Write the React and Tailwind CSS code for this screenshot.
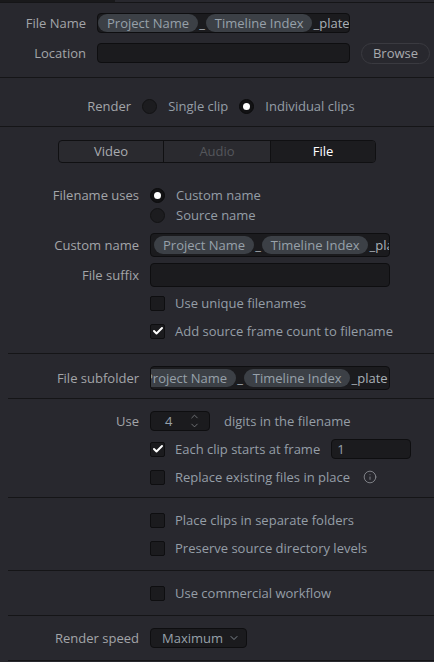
import { ChevronDown, ChevronUp, Check, Info } from "lucide-react";

const Divider = ({ inset = false }) => (
    <div className={`h-px bg-[#151517] ${inset ? "ml-2" : ""}`} />
);

const Pill = ({ children }) => (
    <span className="shrink-0 h-full flex items-center px-[9px] rounded-full bg-[#3c4046] text-[#97a1aa]">
        {children}
    </span>
);

const TokenField = ({ className = "", offset = "" }) => (
    <div
        className={`flex items-center overflow-hidden rounded-sm border border-[#0e0e10] bg-[#1b1b1e] ${className}`}
    >
        <div className={`flex h-full shrink-0 items-center whitespace-nowrap ${offset}`}>
            <Pill>Project Name</Pill>
            <span className="px-px text-[#a9b0b6]">_</span>
            <Pill>Timeline Index</Pill>
            <span className="pl-px text-[#a9b0b6]">_plate</span>
        </div>
    </div>
);

const Radio = ({ checked }) => (
    <span
        className={`flex h-[15px] w-[15px] shrink-0 items-center justify-center rounded-full border ${
            checked ? "border-[#0b0b0c] bg-[#121214]" : "border-[#121214] bg-[#1c1c1f]"
        }`}
    >
        {checked && <span className="h-[7px] w-[7px] rounded-full bg-white" />}
    </span>
);

const Checkbox = ({ checked }) => (
    <span className="flex h-[15px] w-[15px] shrink-0 items-center justify-center rounded-[2px] border border-[#0e0e10] bg-[#1b1b1e]">
        {checked && <Check size={12} strokeWidth={4} className="text-white" />}
    </span>
);

const Row = ({ label, children, className = "" }) => (
    <div className={`flex items-center ${className}`}>
        <div className="w-[140px] shrink-0 pr-[1px] text-right text-[#a3a5a9]">
            {label}
        </div>
        <div className="ml-[10px] flex flex-1 items-center">{children}</div>
    </div>
);

const CheckRow = ({ checked, children, className = "" }) => (
    <Row className={`h-5 ${className}`}>
        <Checkbox checked={checked} />
        <span className="ml-[10px] text-[#959ea7]">{children}</span>
    </Row>
);

export default function App() {
    return (
        <div
            className="relative h-[662px] w-[434px] overflow-hidden bg-[#28282e] text-[13px] leading-none"
            style={{ fontFamily: '"Open Sans", "Noto Sans", sans-serif' }}
        >
            {/* scroll edge at the very top */}
            <div className="flex h-[2px]">
                <div className="w-[115px] bg-[#19191b]" />
            </div>
            <div className="h-px bg-[#151517]" />

            {/* output name and location */}
            <div className="pb-[14px] pt-[10px]">
                <div className="flex h-5 items-center">
                    <div className="w-[86px] text-right text-[#a3a5a9]">File Name</div>
                    <TokenField className="ml-[11px] h-5 w-[253px]" />
                </div>
                <div className="mt-[10px] flex h-5 items-center">
                    <div className="w-[86px] text-right text-[#a3a5a9]">Location</div>
                    <div className="ml-[11px] h-5 w-[253px] rounded-sm border border-[#0e0e10] bg-[#1b1b1e]" />
                    <button className="ml-[11px] flex h-[21px] w-[69px] items-center justify-center rounded-full border border-[#3a3a40] text-[#a8abaf]">
                        Browse
                    </button>
                </div>
            </div>
            <Divider />

            {/* render mode */}
            <div className="flex h-[48px] items-center justify-center pl-[8px] pt-[8px]">
                <span className="text-[#a3a5a9]">Render</span>
                <span className="ml-[11px]">
                    <Radio />
                </span>
                <span className="ml-[11px] text-[#959ea7]">Single clip</span>
                <span className="ml-[11px]">
                    <Radio checked />
                </span>
                <span className="ml-[11px] text-[#959ea7]">Individual clips</span>
            </div>
            <Divider />

            {/* tabs */}
            <div className="pt-[13px]">
                <div className="ml-[58px] flex h-[23px] w-[318px] overflow-hidden rounded-sm border border-[#101012] bg-[#2a2a2f]">
                    <div className="flex w-[105px] items-center justify-center border-r border-[#101012] text-[#a8abaf]">
                        Video
                    </div>
                    <div className="flex w-[107px] items-center justify-center border-r border-[#101012] text-[#55575c]">
                        Audio
                    </div>
                    <div className="flex flex-1 items-center justify-center bg-[#1c1c1f] text-white">
                        File
                    </div>
                </div>
            </div>

            {/* file name options */}
            <div className="pt-[22px]">
                <Row label="Filename uses" className="h-5">
                    <Radio checked />
                    <span className="ml-[11px] text-[#959ea7]">Custom name</span>
                </Row>
                <Row className="h-5">
                    <Radio />
                    <span className="ml-[11px] text-[#959ea7]">Source name</span>
                </Row>
                <Row label="Custom name" className="mt-[8px] h-6">
                    <TokenField className="h-6 w-[240px] pl-[3px] py-[2px]" />
                </Row>
                <Row label="File suffix" className="mt-[6px] h-6">
                    <div className="h-6 w-[240px] rounded-sm border border-[#0e0e10] bg-[#1b1b1e]" />
                </Row>
                <CheckRow className="mt-[6px]">Use unique filenames</CheckRow>
                <CheckRow checked className="mt-[8px]">
                    Add source frame count to filename
                </CheckRow>
            </div>
            <div className="pt-[12px]">
                <Divider inset />
            </div>

            {/* subfolder, scrolled a little to the right */}
            <div className="pb-[8px] pt-[12px]">
                <Row label="File subfolder" className="h-6">
                    <TokenField className="h-6 w-[240px] py-[2px]" offset="-ml-[15px]" />
                </Row>
            </div>
            <Divider inset />

            {/* numbering */}
            <div className="pt-[12px]">
                <Row label="Use" className="h-5">
                    <div className="flex h-5 w-[60px] items-center rounded-sm border border-[#0e0e10] bg-[#1b1b1e]">
                        <span className="ml-[14px] text-[#97a1aa]">4</span>
                        <span className="ml-auto mr-[9px] flex flex-col items-center text-[#8a8d92]">
                            <ChevronUp size={11} strokeWidth={1.6} className="-mb-[2px]" />
                            <ChevronDown size={11} strokeWidth={1.6} />
                        </span>
                    </div>
                    <span className="ml-[14px] text-[#959ea7]">digits in the filename</span>
                </Row>
                <Row className="mt-[8px] h-5">
                    <Checkbox checked />
                    <span className="ml-[10px] text-[#959ea7]">Each clip starts at frame</span>
                    <div className="ml-[11px] flex h-5 w-[80px] items-center rounded-sm border border-[#0e0e10] bg-[#1b1b1e] pl-[5px] text-[#97a1aa]">
                        1
                    </div>
                </Row>
                <Row className="mt-[8px] h-5">
                    <Checkbox />
                    <span className="ml-[10px] text-[#959ea7]">Replace existing files in place</span>
                    <Info size={14} strokeWidth={1.5} className="ml-[13px] text-[#8a8d92]" />
                </Row>
            </div>
            <div className="pt-[10px]">
                <Divider inset />
            </div>

            {/* folder structure */}
            <div className="pb-[12px] pt-[12px]">
                <CheckRow>Place clips in separate folders</CheckRow>
                <CheckRow className="mt-[8px]">Preserve source directory levels</CheckRow>
            </div>
            <Divider inset />

            <div className="py-[12px]">
                <CheckRow>Use commercial workflow</CheckRow>
            </div>
            <Divider inset />

            {/* speed */}
            <div className="pb-[12px] pt-[12px]">
                <Row label="Render speed" className="h-5">
                    <div className="flex h-5 w-[97px] items-center rounded-sm border border-[#0e0e10] bg-[#1b1b1e] pl-[11px] text-[#97a1aa]">
                        Maximum
                        <ChevronDown size={12} strokeWidth={1.6} className="ml-[5px]" />
                    </div>
                </Row>
            </div>
            <Divider inset />
        </div>
    );
}
